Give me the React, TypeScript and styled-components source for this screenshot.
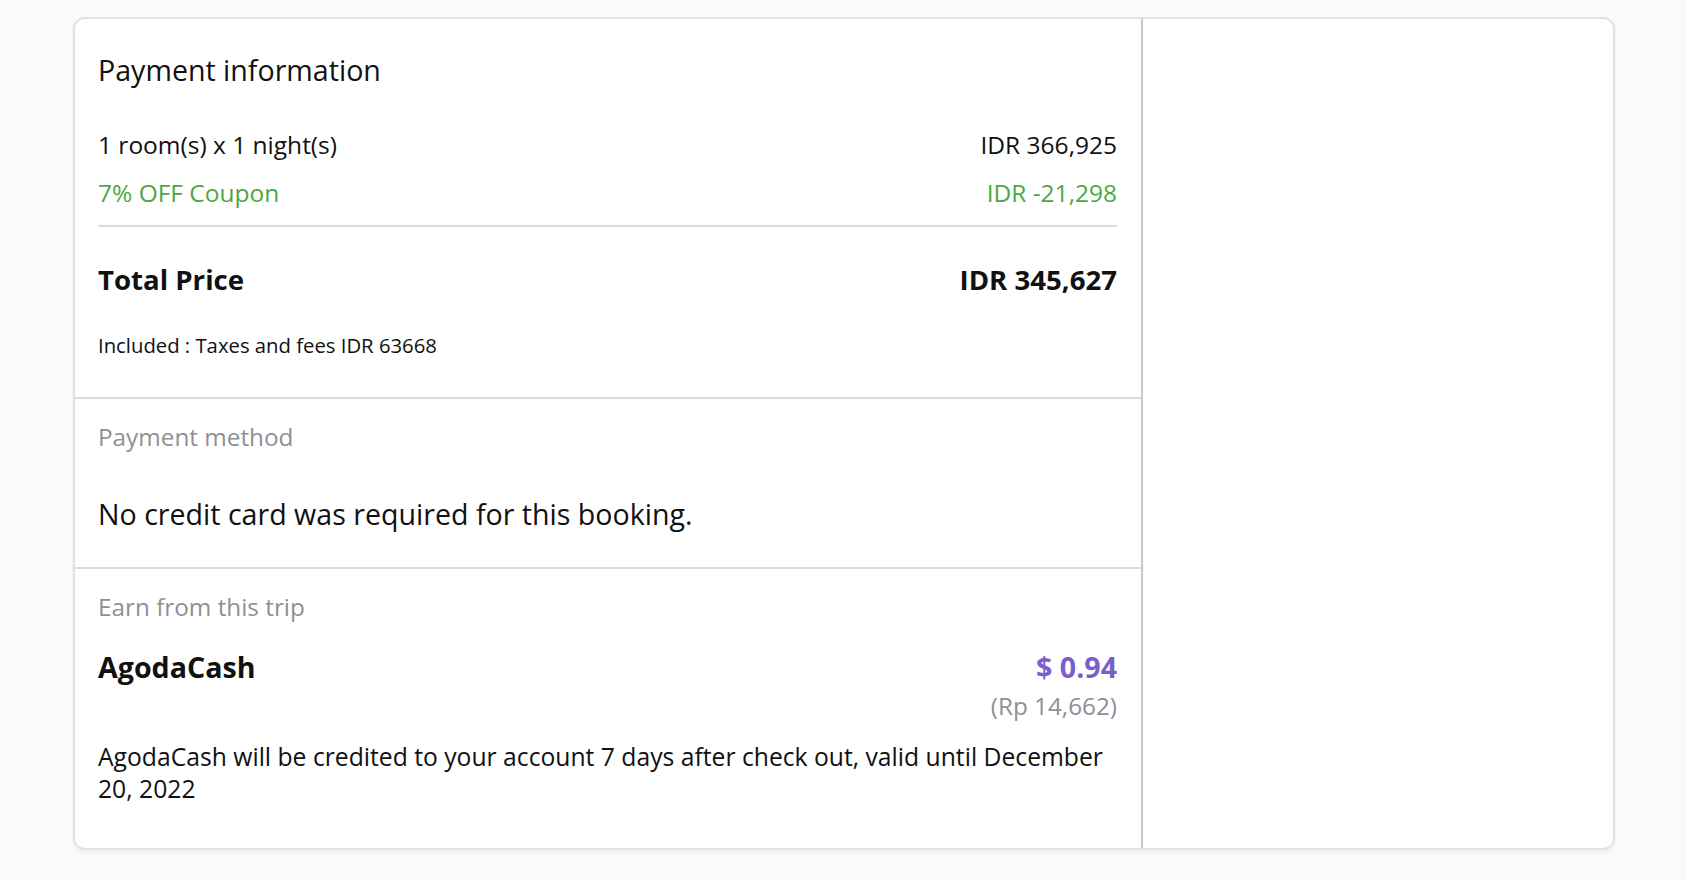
import React from 'react';
import styled, {createGlobalStyle} from 'styled-components';

const COLORS = {
  text: '#111111',
  muted: '#8e9097',
  green: '#4fa73f',
  purple: '#7a5fcb',
  line: '#dadbe0',
  pageBg: '#fafafa',
};

const GlobalStyle = createGlobalStyle`
  html, body {
    margin: 0;
    padding: 0;
    background: ${COLORS.pageBg};
    font-family: "Open Sans", "Noto Sans", sans-serif;
    color: ${COLORS.text};
  }
  * {
    box-sizing: border-box;
  }
`;

interface PriceLine {
  label: string;
  amount: string;
  discount?: boolean;
}

const priceLines: PriceLine[] = [
  {label: '1 room(s) x 1 night(s)', amount: 'IDR 366,925'},
  {label: '7% OFF Coupon', amount: 'IDR -21,298', discount: true},
];

export default function App() {
  return (
    <Page>
      <GlobalStyle/>
      <Card>
        <Main>
          <Section $top={33} $bottom={39}>
            <Heading>Payment information</Heading>
            <Lines>
              {priceLines.map(({label, amount, discount}) => (
                <Row key={label} $discount={discount}>
                  <span>{label}</span>
                  <span>{amount}</span>
                </Row>
              ))}
            </Lines>
            <Divider/>
            <TotalRow>
              <span>Total Price</span>
              <span>IDR 345,627</span>
            </TotalRow>
            <Note>Included : Taxes and fees IDR 63668</Note>
          </Section>

          <Section $top={23} $bottom={36}>
            <Label>Payment method</Label>
            <Body>No credit card was required for this booking.</Body>
          </Section>

          <Section $top={23} $bottom={43} $last>
            <Label>Earn from this trip</Label>
            <CashRow>
              <CashTitle>AgodaCash</CashTitle>
              <CashValue>
                <Dollar>$ 0.94</Dollar>
                <Local>(Rp 14,662)</Local>
              </CashValue>
            </CashRow>
            <Description>
              AgodaCash will be credited to your account 7 days after check out, valid until December 20, 2022
            </Description>
          </Section>
        </Main>
        <Side/>
      </Card>
    </Page>
  );
}

const Page = styled.div`
  padding: 17px 71px 32px 73px;
`;

const Card = styled.div`
  display: flex;
  background: #fff;
  border: 2px solid #e1e2e6;
  border-radius: 12px;
  box-shadow: 0 2px 4px rgba(0, 0, 0, 0.06);
  overflow: hidden;
`;

const Main = styled.div`
  width: 1068px;
  flex-shrink: 0;
  border-right: 2px solid #c7c9d1;
`;

const Side = styled.div`
  flex: 1;
`;

const Section = styled.section<{$top: number; $bottom: number; $last?: boolean}>`
  padding: ${p => p.$top}px 24px ${p => p.$bottom}px 23px;
  border-bottom: ${p => p.$last ? 'none' : `2px solid ${COLORS.line}`};
`;

const Heading = styled.h2`
  margin: 0;
  font-size: 28.6px;
  line-height: 36px;
  font-weight: 400;
`;

const Lines = styled.div`
  display: flex;
  flex-direction: column;
  gap: 18px;
  margin-top: 42px;
`;

const Row = styled.div<{$discount?: boolean}>`
  display: flex;
  justify-content: space-between;
  font-size: 24.5px;
  line-height: 30px;
  color: ${p => p.$discount ? COLORS.green : COLORS.text};
`;

const Divider = styled.hr`
  margin: 17px 0 0;
  border: none;
  height: 2px;
  background: ${COLORS.line};
`;

const TotalRow = styled.div`
  display: flex;
  justify-content: space-between;
  margin-top: 34px;
  font-size: 27.6px;
  line-height: 36px;
  font-weight: 700;
`;

const Note = styled.div`
  margin-top: 35px;
  font-size: 20.3px;
  line-height: 26px;
`;

const Label = styled.div`
  font-size: 24.3px;
  line-height: 30px;
  color: ${COLORS.muted};
`;

const Body = styled.p`
  margin: 45px 0 0;
  font-size: 28.6px;
  line-height: 34px;
`;

const CashRow = styled.div`
  display: flex;
  justify-content: space-between;
  align-items: flex-start;
  margin-top: 28px;
`;

const CashTitle = styled.div`
  font-size: 28.6px;
  line-height: 34px;
  font-weight: 700;
`;

const CashValue = styled.div`
  display: flex;
  flex-direction: column;
  align-items: flex-end;
  gap: 8px;
`;

const Dollar = styled.div`
  font-size: 28.6px;
  line-height: 34px;
  font-weight: 700;
  color: ${COLORS.purple};
`;

const Local = styled.div`
  font-size: 24.3px;
  line-height: 28px;
  color: ${COLORS.muted};
`;

const Description = styled.p`
  margin: 21px 0 0;
  font-size: 24.7px;
  line-height: 32px;
`;
